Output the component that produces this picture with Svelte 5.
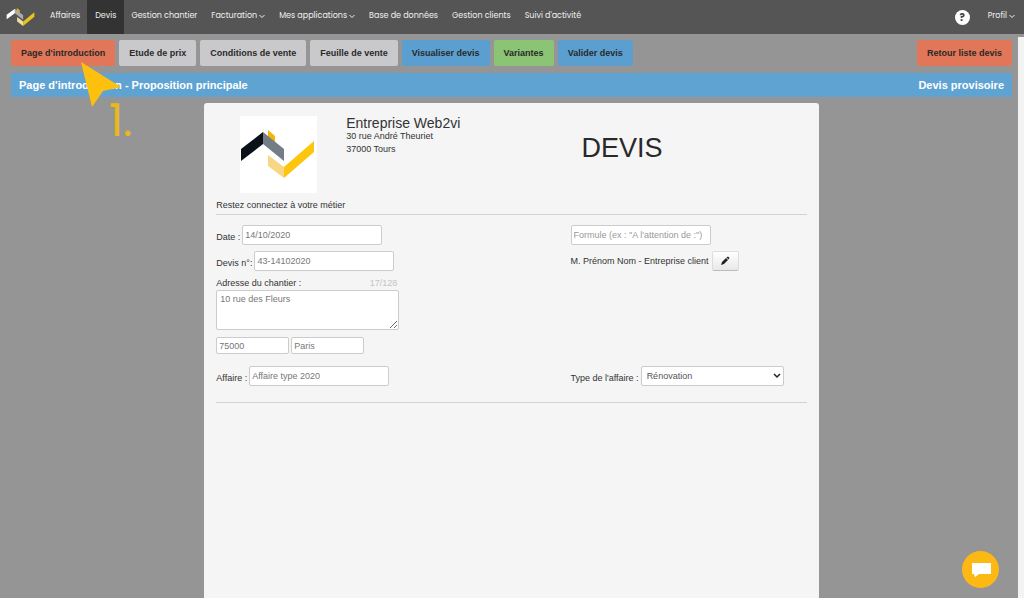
<script lang="ts">
  const navItems = [
    { label: 'Affaires' },
    { label: 'Devis', active: true },
    { label: 'Gestion chantier' },
    { label: 'Facturation', menu: true },
    { label: 'Mes applications', menu: true },
    { label: 'Base de données' },
    { label: 'Gestion clients' },
    { label: "Suivi d'activité" },
  ];

  const tabs = [
    { label: "Page d'introduction", tone: 'orange' },
    { label: 'Etude de prix', tone: 'grey' },
    { label: 'Conditions de vente', tone: 'grey' },
    { label: 'Feuille de vente', tone: 'grey' },
    { label: 'Visualiser devis', tone: 'blue' },
    { label: 'Variantes', tone: 'green' },
    { label: 'Valider devis', tone: 'blue' },
  ];

  let date = $state('14/10/2020');
  let number = $state('43-14102020');
  let address = $state('10 rue des Fleurs');
  let zip = $state('75000');
  let city = $state('Paris');
  let affair = $state('Affaire type 2020');
  let formula = $state('');
  let kind = $state('Rénovation');
</script>

{#snippet chevron()}
  <svg class="chevron" viewBox="0 0 6 6" aria-hidden="true">
    <path d="M0.5 2l2.5 2.500 2.500-2.500" fill="none" stroke="currentColor" />
  </svg>
{/snippet}

<div class="page">
  <nav class="navbar">
    <a class="brand" href="#accueil" aria-label="Accueil">
      <svg viewBox="0 0 74 48" aria-hidden="true">
        <path d="M27 0l8 6v12l-8-7z" fill="#e5b800" />
        <path d="M0 18L22 2v12L0 30z" fill="#fff" />
        <path d="M22 2l22 17v12L22 14z" fill="#a9abad" />
        <path d="M28 24l16 12v12L28 36z" fill="#efe0a0" />
        <path d="M44 36l30-25v12L44 48z" fill="#e8c51c" />
      </svg>
    </a>
    {#each navItems as item (item.label)}
      <a class="nav-link" class:active={item.active} href="#menu">
        {item.label}
        {#if item.menu}{@render chevron()}{/if}
      </a>
    {/each}
    <div class="nav-end">
      <button type="button" class="help" aria-label="Aide">?</button>
      <a class="nav-link" href="#profil">Profil {@render chevron()}</a>
    </div>
  </nav>

  <div class="body">
    <main>
      <div class="tabs">
        {#each tabs as tab (tab.label)}
          <button type="button" class="tab {tab.tone}">{tab.label}</button>
        {/each}
        <button type="button" class="tab orange back">Retour liste devis</button>
      </div>

      <header class="title-bar">
        <span>Page d'introduction - Proposition principale</span>
        <span>Devis provisoire</span>
      </header>

      <section class="sheet">
        <div class="company">
          <div class="logo">
            <svg viewBox="0 0 77 77" aria-hidden="true">
              <path d="M28 14l7 6v9l-7-6z" fill="#f2b50c" />
              <path d="M1 33l22-17v12L1 45z" fill="#0b1118" />
              <path d="M23 16l21 17v12L23 28z" fill="#747c85" />
              <path d="M28 39l16 12v11L28 50z" fill="#f7d785" />
              <path d="M44 51l30-26v11L44 62z" fill="#fdc50c" />
            </svg>
          </div>
          <address>
            <strong>Entreprise Web2vi</strong>
            <span>30 rue André Theuriet</span>
            <span>37000 Tours</span>
          </address>
          <h1>DEVIS</h1>
        </div>
        <p class="tagline">Restez connectez à votre métier</p>

        <form class="details">
          <div class="column">
            <div class="field">
              <label for="date">Date :</label>
              <input id="date" type="text" bind:value={date} />
            </div>
            <div class="field">
              <label for="number">Devis n°:</label>
              <input id="number" type="text" bind:value={number} />
            </div>
            <div class="site">
              <div class="site-head">
                <label for="address">Adresse du chantier :</label>
                <span class="count">{address.length}/128</span>
              </div>
              <textarea id="address" bind:value={address}></textarea>
              <div class="town">
                <input type="text" aria-label="Code postal" bind:value={zip} />
                <input type="text" aria-label="Ville" bind:value={city} />
              </div>
            </div>
            <div class="field">
              <label for="affair">Affaire :</label>
              <input id="affair" type="text" bind:value={affair} />
            </div>
          </div>

          <div class="column">
            <div class="field">
              <input
                type="text"
                aria-label="Formule"
                placeholder={'Formule (ex : "A l\'attention de :")'}
                bind:value={formula}
              />
            </div>
            <div class="client">
              <span>M. Prénom Nom - Entreprise client</span>
              <button type="button" class="edit" aria-label="Modifier le client">
                <svg viewBox="0 0 10 10" aria-hidden="true">
                  <path d="M1 9l1-3 4-4 2 2-4 4z" fill="#222" />
                  <path d="M6.500 1.500l1.500-1 1.500 1.500-1 1.500z" fill="#222" />
                </svg>
              </button>
            </div>
            <div class="field kind">
              <label for="kind">Type de l'affaire :</label>
              <div class="select">
                <select id="kind" bind:value={kind}>
                  <option>Rénovation</option>
                  <option>Neuf</option>
                </select>
                <svg viewBox="0 0 8 6" aria-hidden="true">
                  <path d="M1 1l3 3 3-3" fill="none" stroke="#222" stroke-width="1.5" />
                </svg>
              </div>
            </div>
          </div>
        </form>
      </section>
    </main>
    <div class="scroll-track"></div>
  </div>

  <div class="step">
    <svg viewBox="0 0 40 45" aria-hidden="true">
      <path d="M0 0l40 25-18 4-11 16z" fill="#fdc00f" />
    </svg>
    <span>1.</span>
  </div>

  <button type="button" class="chat" aria-label="Ouvrir la discussion">
    <svg viewBox="0 0 20 16" aria-hidden="true">
      <path d="M1 1h19v11H8l-4 3-1-3H1z" fill="#fff" />
    </svg>
  </button>
</div>

<style>
  :global(body) {
    background: #959595;
  }

  .page {
    min-height: 100vh;
    display: flex;
    flex-direction: column;
    background: #959595;
    color: #333;
    font-family: 'Helvetica Neue', 'Liberation Sans', Arial, sans-serif;
    font-size: 9px;
  }

  .page * {
    box-sizing: border-box;
  }

  button,
  input,
  select,
  textarea {
    font: inherit;
    margin: 0;
  }

  button {
    border: 0;
    cursor: pointer;
  }

  svg {
    display: block;
  }

  .navbar {
    height: 34px;
    display: flex;
    align-items: stretch;
    background: #555;
    font-family: Poppins, Inter, sans-serif;
    font-size: 8px;
  }

  .brand {
    display: flex;
    align-items: center;
    padding: 0 8px 0 6px;
  }

  .brand svg {
    width: 29px;
    height: 18px;
  }

  .nav-link {
    display: flex;
    align-items: center;
    gap: 2px;
    padding: 0 7px 2px;
    color: #f0f0f0;
    text-decoration: none;
    white-space: nowrap;
  }

  .nav-link.active {
    padding: 0 8px 2px;
    background: #333;
  }

  .chevron {
    width: 6px;
    height: 6px;
  }

  .nav-end {
    margin-left: auto;
    display: flex;
    align-items: center;
    gap: 11px;
    padding-right: 2px;
  }

  .help {
    width: 15px;
    height: 15px;
    padding: 0;
    border-radius: 50%;
    background: #fff;
    color: #444;
    font-size: 10px;
    font-weight: 700;
    line-height: 15px;
  }

  .body {
    flex: 1;
    display: flex;
  }

  main {
    flex: 1;
    display: flex;
    flex-direction: column;
    padding: 6px 6px 0 11px;
  }

  .scroll-track {
    width: 6px;
    margin-top: 3px;
    background: #f3f3f3;
  }

  .tabs {
    display: flex;
    gap: 4px;
  }

  .tab {
    height: 26px;
    padding: 0 10px;
    border-radius: 2px;
    color: #292929;
    font-weight: 700;
    white-space: nowrap;
  }

  .orange {
    background: #e27658;
  }

  .grey {
    background: #c9c9cb;
  }

  .blue {
    background: #5b9fd1;
  }

  .green {
    background: #8cc475;
  }

  .back {
    margin-left: auto;
  }

  .title-bar {
    display: flex;
    justify-content: space-between;
    margin-top: 7px;
    padding: 0 8px;
    background: #5fa3d3;
    color: #fff;
    font-size: 11px;
    font-weight: 700;
    line-height: 24px;
  }

  .sheet {
    flex: 1;
    width: 60vw;
    margin: 6px auto 0;
    padding: 13px 12px 0;
    border-radius: 3px 3px 0 0;
    background: #f5f5f5;
  }

  .company {
    display: grid;
    grid-template-columns: 22% 30% 1fr;
  }

  .logo {
    width: 77px;
    height: 77px;
    margin-left: 24px;
    background: #fff;
  }

  address {
    display: flex;
    flex-direction: column;
    font-style: normal;
    line-height: 13px;
    white-space: nowrap;
  }

  address strong {
    font-size: 14px;
    font-weight: 400;
    line-height: 14px;
  }

  h1 {
    margin: 18px 0 0;
    padding-right: 86px;
    color: #292929;
    font-size: 27px;
    font-weight: 400;
    line-height: 28px;
    text-align: center;
  }

  .tagline {
    margin: 5px 0 0;
    padding-bottom: 2px;
    border-bottom: 1px solid #d2d2d2;
    line-height: 14px;
  }

  .details {
    display: grid;
    grid-template-columns: 3fr 2fr;
    padding: 10px 0 16px;
    border-bottom: 1px solid #d2d2d2;
  }

  .column {
    display: flex;
    flex-direction: column;
    gap: 6px;
  }

  .field {
    display: flex;
    align-items: flex-end;
    gap: 2px;
  }

  .field label {
    line-height: 15px;
  }

  input,
  textarea,
  select {
    border: 1px solid #ccc;
    border-radius: 2px;
    background: #fff;
    color: #777;
  }

  input {
    height: 20px;
    padding: 0 2px;
  }

  input::placeholder {
    color: #999;
  }

  .field input {
    width: 140px;
  }

  .site {
    width: 183px;
    margin-bottom: 6px;
  }

  .site-head {
    display: flex;
    justify-content: space-between;
    padding: 0 2px 0 0;
    line-height: 13px;
  }

  .count {
    color: #c4c4c4;
  }

  textarea {
    display: block;
    width: 100%;
    height: 40px;
    padding: 2px 3px;
    line-height: 12px;
    resize: both;
  }

  .town {
    display: flex;
    gap: 2px;
    margin-top: 7px;
  }

  .town input {
    width: 73px;
    height: 17px;
  }

  .client {
    display: flex;
    align-items: center;
    gap: 3px;
    white-space: nowrap;
  }

  .edit {
    width: 27px;
    height: 20px;
    display: grid;
    place-items: center;
    padding: 0;
    border: 1px solid #ddd;
    border-bottom-color: #bbb;
    border-radius: 2px;
    background: linear-gradient(#fff, #e8e8e8);
  }

  .edit svg {
    width: 10px;
    height: 10px;
  }

  .kind {
    margin-top: auto;
  }

  .select {
    position: relative;
  }

  .select select {
    display: block;
    width: 143px;
    height: 20px;
    padding: 0 5px;
    appearance: none;
    color: #555;
  }

  .select svg {
    position: absolute;
    right: 3px;
    top: 7px;
    width: 8px;
    height: 6px;
    pointer-events: none;
  }

  .step {
    position: absolute;
    left: 81px;
    top: 62px;
    color: #e9b91c;
    pointer-events: none;
  }

  .step svg {
    width: 40px;
    height: 45px;
  }

  .step span {
    position: absolute;
    left: 28px;
    top: 37px;
    font-family: Poppins, Inter, sans-serif;
    font-size: 44px;
    font-weight: 400;
    line-height: 44px;
  }

  .chat {
    position: fixed;
    right: 25px;
    bottom: 10px;
    width: 37px;
    height: 37px;
    display: grid;
    place-items: center;
    padding: 0;
    border-radius: 50%;
    background: #fdb913;
  }

  .chat svg {
    width: 20px;
    height: 16px;
  }
</style>
